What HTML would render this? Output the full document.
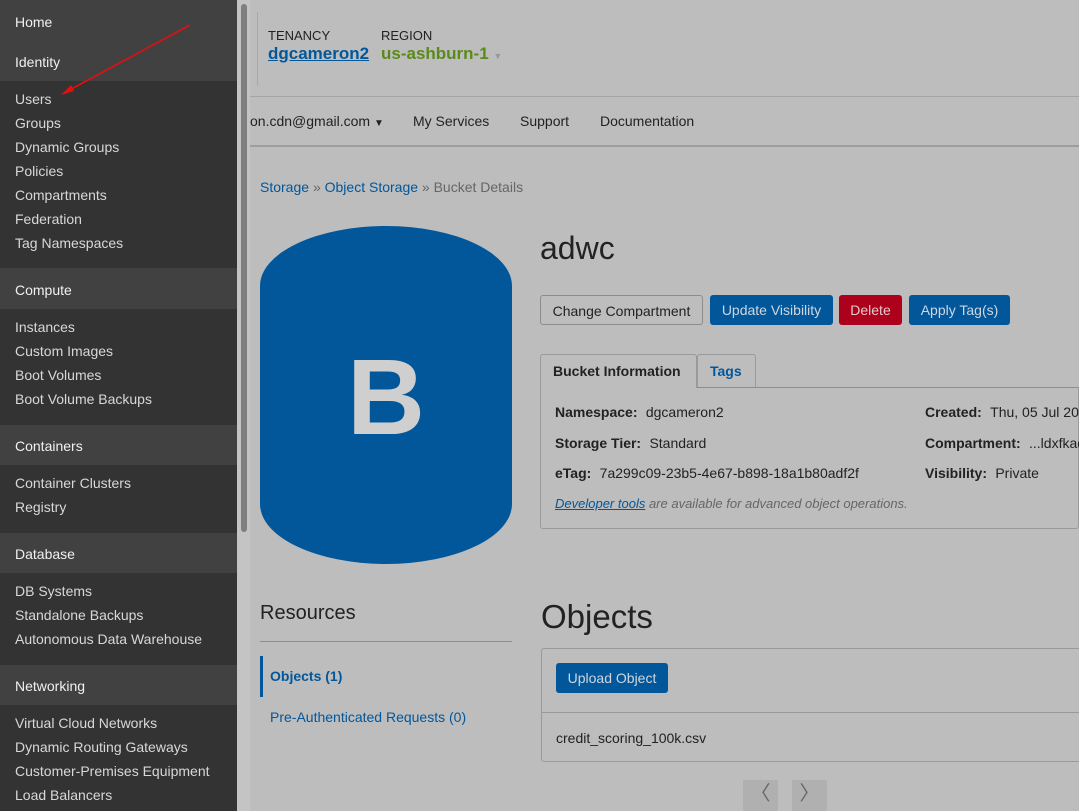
<!DOCTYPE html>
<html><head><meta charset="utf-8"><style>
*{margin:0;padding:0;box-sizing:border-box}
body{width:1079px;height:811px;overflow:hidden;background:#bdbdbd;font-family:"Liberation Sans",sans-serif;position:relative;color:#222}
.a{position:absolute;white-space:nowrap}
#sb{position:absolute;left:0;top:0;width:237px;height:811px;background:#333}
.h{position:absolute;left:0;width:237px;background:#414141}
.s{position:absolute;left:15px;font-size:14px;color:#d8d8d8}
.hd{color:#f0f0f0}
.btn{position:absolute;top:295px;height:30px;border-radius:3px;font-size:14px;line-height:30px;text-align:center}
.lab{font-weight:bold;font-size:14px;color:#222}
.val{font-size:14px;color:#222}
</style></head><body>
<div id="sb">
<div class="h" style="top:0;height:81px"></div>
<div class="h" style="top:268px;height:41px"></div>
<div class="h" style="top:425px;height:40px"></div>
<div class="h" style="top:533px;height:40px"></div>
<div class="h" style="top:665px;height:40px"></div>
<div class="s hd" style="top:14px">Home</div>
<div class="s hd" style="top:54px">Identity</div>
<div class="s" style="top:91px">Users</div>
<div class="s" style="top:115px">Groups</div>
<div class="s" style="top:139px">Dynamic Groups</div>
<div class="s" style="top:163px">Policies</div>
<div class="s" style="top:187px">Compartments</div>
<div class="s" style="top:211px">Federation</div>
<div class="s" style="top:235px">Tag Namespaces</div>
<div class="s hd" style="top:282px">Compute</div>
<div class="s" style="top:319px">Instances</div>
<div class="s" style="top:343px">Custom Images</div>
<div class="s" style="top:367px">Boot Volumes</div>
<div class="s" style="top:391px">Boot Volume Backups</div>
<div class="s hd" style="top:438px">Containers</div>
<div class="s" style="top:475px">Container Clusters</div>
<div class="s" style="top:499px">Registry</div>
<div class="s hd" style="top:546px">Database</div>
<div class="s" style="top:583px">DB Systems</div>
<div class="s" style="top:607px">Standalone Backups</div>
<div class="s" style="top:631px">Autonomous Data Warehouse</div>
<div class="s hd" style="top:678px">Networking</div>
<div class="s" style="top:715px">Virtual Cloud Networks</div>
<div class="s" style="top:739px">Dynamic Routing Gateways</div>
<div class="s" style="top:763px">Customer-Premises Equipment</div>
<div class="s" style="top:787px">Load Balancers</div>
</div>
<svg class="a" style="left:0;top:0" width="237" height="120"><line x1="190" y1="25" x2="64" y2="93" stroke="#e01010" stroke-width="1.6"/><polygon points="61,95 71,85 74,91" fill="#e01010"/></svg>
<div class="a" style="left:237px;top:0;width:13px;height:811px;background:#c4c4c4"></div>
<div class="a" style="left:241px;top:4px;width:6px;height:528px;background:#7e807f;border-radius:3px"></div>
<div class="a" style="left:257px;top:12px;width:1px;height:74px;background:#a8a8a8"></div>
<div class="a" style="left:268px;top:28px;font-size:13px">TENANCY</div>
<div class="a" style="left:381px;top:28px;font-size:13px">REGION</div>
<div class="a" style="left:268px;top:44px;font-size:17px;font-weight:bold;color:#02579b;text-decoration:underline">dgcameron2</div>
<div class="a" style="left:381px;top:44px;font-size:17px;font-weight:bold;color:#5a8a1a">us-ashburn-1 <span style="font-size:9px;color:#999">▼</span></div>
<div class="a" style="left:250px;top:96px;width:829px;height:1px;background:#a4a4a4"></div>
<div class="a" style="left:250px;top:113px;font-size:14px">on.cdn@gmail.com <span style="font-size:10px">▼</span></div>
<div class="a" style="left:413px;top:113px;font-size:14px">My Services</div>
<div class="a" style="left:520px;top:113px;font-size:14px">Support</div>
<div class="a" style="left:600px;top:113px;font-size:14px">Documentation</div>
<div class="a" style="left:250px;top:145px;width:829px;height:2px;background:#9e9e9e"></div>
<div class="a" style="left:260px;top:179px;font-size:14px;color:#02579b">Storage <span style="color:#666">»</span> Object Storage <span style="color:#666">» Bucket Details</span></div>
<svg class="a" style="left:260px;top:226px" width="252" height="338"><path d="M0,60 A126,60 0 0 1 252,60 L252,278 A126,60 0 0 1 0,278 Z" fill="#02579b"/><text x="126" y="208" text-anchor="middle" font-family="Liberation Sans" font-weight="bold" font-size="108" fill="#cfcfcf">B</text></svg>
<div class="a" style="left:540px;top:230px;font-size:32px">adwc</div>
<div class="btn" style="left:540px;width:163px;border:1px solid #8c8c8c;color:#222">Change Compartment</div>
<div class="btn" style="left:710px;width:123px;background:#02579b;color:#cfd6df">Update Visibility</div>
<div class="btn" style="left:839px;width:63px;background:#ad001c;color:#e6c9cc">Delete</div>
<div class="btn" style="left:909px;width:101px;background:#02579b;color:#cfd6df">Apply Tag(s)</div>
<div class="a" style="left:540px;top:387px;width:539px;height:142px;border:1px solid #9a9a9a;border-top:none;border-radius:0 0 3px 3px"></div>
<div class="a" style="left:540px;top:387px;width:539px;height:1px;background:#8e8e8e"></div>
<div class="a" style="left:540px;top:354px;width:157px;height:34px;border:1px solid #9a9a9a;border-bottom:none;background:#bdbdbd;border-radius:3px 3px 0 0;font-size:14px;font-weight:bold;padding:8px 12px">Bucket Information</div>
<div class="a" style="left:697px;top:354px;width:59px;height:33px;border:1px solid #9a9a9a;border-bottom:none;border-radius:3px 3px 0 0;font-size:14px;font-weight:bold;color:#02579b;padding:8px 12px">Tags</div>
<div class="a" style="left:555px;top:404px"><span class="lab">Namespace:</span> <span class="val">&nbsp;dgcameron2</span></div>
<div class="a" style="left:555px;top:435px"><span class="lab">Storage Tier:</span> <span class="val">&nbsp;Standard</span></div>
<div class="a" style="left:555px;top:465px"><span class="lab">eTag:</span> <span class="val">&nbsp;7a299c09-23b5-4e67-b898-18a1b80adf2f</span></div>
<div class="a" style="left:925px;top:404px"><span class="lab">Created:</span> <span class="val">&nbsp;Thu, 05 Jul 2018</span></div>
<div class="a" style="left:925px;top:435px"><span class="lab">Compartment:</span> <span class="val">&nbsp;...ldxfkaq</span></div>
<div class="a" style="left:925px;top:465px"><span class="lab">Visibility:</span> <span class="val">&nbsp;Private</span></div>
<div class="a" style="left:555px;top:496px;font-size:13px;font-style:italic;color:#666"><span style="color:#02579b;text-decoration:underline">Developer tools</span> are available for advanced object operations.</div>
<div class="a" style="left:260px;top:602px;font-size:20px;color:#222">Resources</div>
<div class="a" style="left:260px;top:641px;width:252px;height:1px;background:#8e8e8e"></div>
<div class="a" style="left:260px;top:656px;width:3px;height:41px;background:#02579b"></div>
<div class="a" style="left:270px;top:668px;font-size:14px;font-weight:bold;color:#02579b">Objects (1)</div>
<div class="a" style="left:270px;top:709px;font-size:14px;color:#02579b">Pre-Authenticated Requests (0)</div>
<div class="a" style="left:541px;top:598px;font-size:33px;color:#222">Objects</div>
<div class="a" style="left:541px;top:648px;width:540px;height:114px;border:1px solid #9a9a9a;border-radius:3px"></div>
<div class="a" style="left:541px;top:712px;width:540px;height:1px;background:#9a9a9a"></div>
<div class="a" style="left:556px;top:663px;width:112px;height:30px;background:#02579b;border-radius:3px;color:#cfd6df;font-size:14px;line-height:30px;text-align:center">Upload Object</div>
<div class="a" style="left:556px;top:730px;font-size:14px">credit_scoring_100k.csv</div>
<div class="a" style="left:743px;top:780px;width:35px;height:31px;background:#b0b0b0;border-radius:2px;font-size:20px;color:#666;text-align:center;line-height:28px">〈</div>
<div class="a" style="left:792px;top:780px;width:35px;height:31px;background:#b0b0b0;border-radius:2px;font-size:20px;color:#666;text-align:center;line-height:28px">〉</div>
</body></html>
